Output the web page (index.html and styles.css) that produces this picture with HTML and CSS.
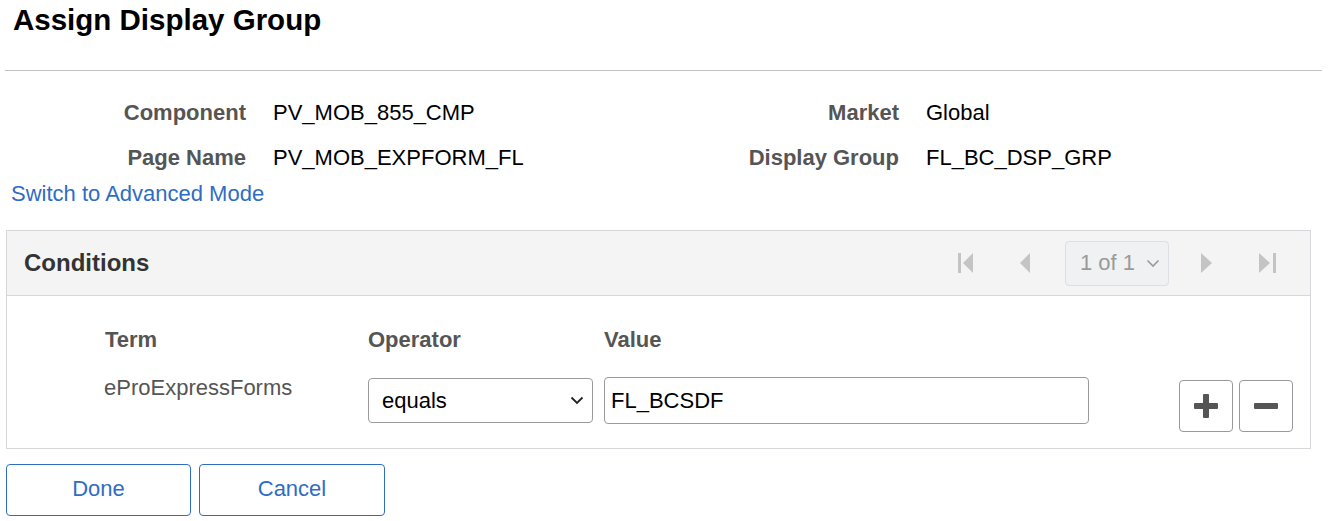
FILE: index.html
```html
<!DOCTYPE html>
<html lang="en">
<head>
<meta charset="utf-8">
<title>Assign Display Group</title>
<link rel="stylesheet" href="styles.css">
</head>
<body>
<div class="page">
  <h1 class="title">Assign Display Group</h1>
  <hr class="sep">
  <div class="info">
    <div class="info-col">
      <div class="info-row"><span class="lbl lbl-l">Component</span><span class="val">PV_MOB_855_CMP</span></div>
      <div class="info-row"><span class="lbl lbl-l">Page Name</span><span class="val">PV_MOB_EXPFORM_FL</span></div>
    </div>
    <div class="info-col info-col-r">
      <div class="info-row"><span class="lbl lbl-r">Market</span><span class="val">Global</span></div>
      <div class="info-row"><span class="lbl lbl-r">Display Group</span><span class="val">FL_BC_DSP_GRP</span></div>
    </div>
  </div>
  <a class="link" href="#">Switch to Advanced Mode</a>

  <section class="grid-box">
    <div class="grid-head">
      <h2 class="grid-title">Conditions</h2>
      <div class="pager">
        <span class="pg-btn pg-first"><svg width="16" height="22" viewBox="0 0 16 22"><rect x="0" y="1" width="3" height="20" fill="#c4c4c4"/><path d="M15 1 L5 11 L15 21 Z" fill="#c4c4c4"/></svg></span>
        <span class="pg-btn pg-prev"><svg width="10" height="22" viewBox="0 0 10 22"><path d="M10 1 L0 11 L10 21 Z" fill="#c4c4c4"/></svg></span>
        <span class="pg-sel">1 of 1 <svg class="pg-chev" width="14" height="9" viewBox="0 0 14 9"><path d="M1.5 1.5 L7 7 L12.5 1.5" fill="none" stroke="#9a9a9a" stroke-width="1.6"/></svg></span>
        <span class="pg-btn pg-next"><svg width="11" height="22" viewBox="0 0 11 22"><path d="M0 1 L11 11 L0 21 Z" fill="#c4c4c4"/></svg></span>
        <span class="pg-btn pg-last"><svg width="17" height="22" viewBox="0 0 17 22"><path d="M0 1 L11 11 L0 21 Z" fill="#c4c4c4"/><rect x="14" y="1" width="3" height="20" fill="#c4c4c4"/></svg></span>
      </div>
    </div>
    <div class="grid-body">
      <div class="cond-row cond-head">
        <div class="c-term">Term</div>
        <div class="c-op">Operator</div>
        <div class="c-val">Value</div>
      </div>
      <div class="cond-row cond-data">
        <div class="c-term term-text">eProExpressForms</div>
        <div class="c-op">
          <div class="select">equals<svg class="sel-chev" width="14" height="9" viewBox="0 0 14 9"><path d="M1.5 1.5 L7 7 L12.5 1.5" fill="none" stroke="#222" stroke-width="1.8"/></svg></div>
        </div>
        <div class="c-val"><div class="input">FL_BCSDF</div></div>
        <div class="c-act">
          <span class="icon-btn"><svg width="24" height="24" viewBox="0 0 24 24"><rect x="9" y="0" width="6" height="24" rx="1" fill="#555"/><rect x="0" y="9" width="24" height="6" rx="1" fill="#555"/></svg></span>
          <span class="icon-btn"><svg width="24" height="24" viewBox="0 0 24 24"><rect x="0" y="9" width="24" height="6" rx="1" fill="#555"/></svg></span>
        </div>
      </div>
    </div>
  </section>

  <div class="actions">
    <button class="btn">Done</button>
    <button class="btn">Cancel</button>
  </div>
</div>
</body>
</html>
```

FILE: styles.css
```css
html, body {
  margin: 0;
  padding: 0;
  background: #fff;
}
body {
  font-family: "Liberation Sans", Arial, sans-serif;
  color: #000;
  font-size: 22px;
}
.page {
  width: 1332px;
  height: 521px;
  overflow: hidden;
  position: relative;
}
.title {
  margin: 0;
  padding: 3px 0 0 13px;
  font-size: 29.5px;
  font-weight: bold;
  line-height: 34px;
  height: 36px;
}
.sep {
  margin: 31px 10px 0 5px;
  border: 0;
  border-top: 1px solid #c2c2c2;
  height: 0;
}
.info {
  display: flex;
  margin-top: 29px;
}
.info-col {
  display: flex;
  flex-direction: column;
  gap: 20px;
}
.info-row {
  display: flex;
  align-items: center;
  height: 25px;
}
.lbl {
  font-weight: bold;
  color: #555;
  text-align: right;
  padding-right: 27px;
  box-sizing: border-box;
}
.lbl-l { width: 273px; }
.lbl-r { width: 653px; }
.info-col:first-child { width: 273px; }
.info-col:first-child .info-row { width: 600px; }
.val {
  color: #000;
}
.link {
  display: block;
  margin: 11px 0 0 11px;
  color: #2f6dc4;
  text-decoration: none;
  line-height: 25px;
  width: max-content;
}
.grid-box {
  margin: 24px 21px 0 6px;
  border: 1px solid #d5d7da;
  height: 219px;
  box-sizing: border-box;
}
.grid-head {
  height: 65px;
  background: #f4f4f4;
  border-bottom: 1px solid #d5d7da;
  display: flex;
  align-items: center;
  justify-content: space-between;
  padding: 0 34px 0 17px;
  box-sizing: border-box;
}
.grid-title {
  margin: 0;
  font-size: 24px;
  font-weight: bold;
  color: #333;
}
.pager {
  display: flex;
  align-items: center;
}
.pg-btn {
  display: flex;
  align-items: center;
  height: 44px;
}
.pg-first { margin-right: 46px; }
.pg-prev { margin-right: 35px; }
.pg-next { margin-left: 32px; margin-right: 47px; }
.pg-sel {
  display: flex;
  align-items: center;
  justify-content: space-between;
  width: 104px;
  height: 45px;
  box-sizing: border-box;
  border: 1px solid #dcdfe3;
  border-radius: 4px;
  background: #eff1f3;
  color: #9a9a9a;
  padding: 0 8px 0 14px;
}
.grid-body {
  padding: 32px 0 0 97px;
}
.cond-row {
  display: flex;
}
.cond-head {
  font-weight: bold;
  color: #555;
  height: 24px;
  align-items: center;
}
.cond-data {
  margin-top: 26px;
  align-items: flex-start;
}
.c-term {
  width: 264px;
  padding-left: 0;
  box-sizing: border-box;
}
.cond-head .c-term { padding-left: 1px; }
.term-text {
  color: #555;
  margin-top: -3px;
}
.c-op {
  width: 236px;
}
.c-val {
  width: 575px;
}
.select {
  width: 225px;
  height: 45px;
  box-sizing: border-box;
  border: 1px solid #9b9b9b;
  border-radius: 4px;
  display: flex;
  align-items: center;
  justify-content: space-between;
  padding: 0 8px 0 13px;
  color: #000;
}
.input {
  width: 485px;
  height: 47px;
  box-sizing: border-box;
  border: 1px solid #9b9b9b;
  border-radius: 4px;
  display: flex;
  align-items: center;
  padding: 0 6px;
  margin-top: -1px;
}
.c-act {
  display: flex;
  gap: 6px;
  margin-top: 2px;
}
.icon-btn {
  width: 54px;
  height: 52px;
  box-sizing: border-box;
  border: 1px solid #999;
  border-radius: 4px;
  display: flex;
  align-items: center;
  justify-content: center;
}
.actions {
  display: flex;
  gap: 8px;
  margin: 15px 0 0 6px;
}
.btn {
  width: 185px;
  height: 52px;
  border: 1px solid #2f6dc4;
  border-radius: 4px;
  background: #fff;
  color: #2f6dc4;
  font-family: "Liberation Sans", Arial, sans-serif;
  font-size: 22px;
  padding: 0 0 2px 0;
}
.btn + .btn { width: 186px; }
```
